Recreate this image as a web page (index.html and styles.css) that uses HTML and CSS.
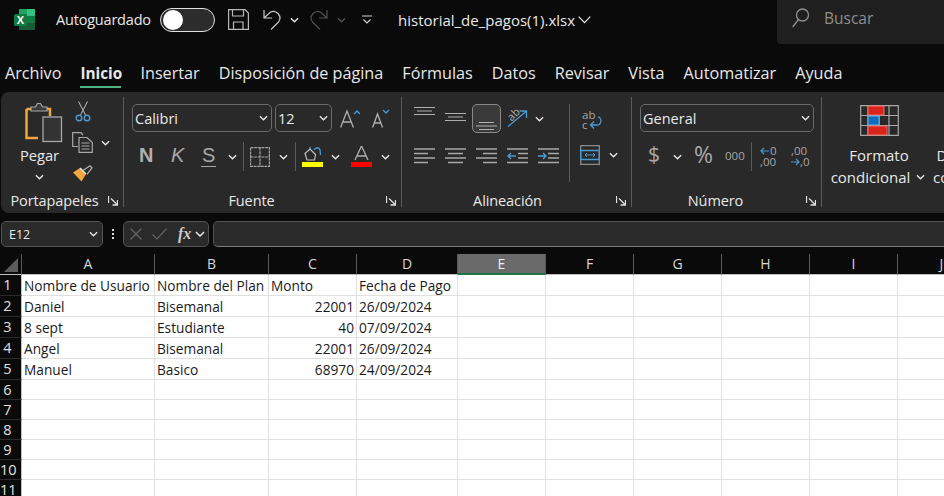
FILE: index.html
```html
<!DOCTYPE html>
<html lang="es">
<head>
    <meta charset="UTF-8">
    <meta name="viewport" content="width=device-width, initial-scale=1.0">
    <title>historial_de_pagos(1).xlsx</title>
    <link rel="stylesheet" href="styles.css">
</head>
<body>
    <svg class="defs" width="0" height="0">
        <symbol id="chev" viewBox="0 0 10 6"><path d="M1 1l4 4 4-4" fill="none" stroke="currentColor" stroke-width="1.5"/></symbol>
        <symbol id="launch" viewBox="0 0 10 10"><path d="M.5 0v7M3 2.5l6 6M4.500 9H9.500V4" fill="none" stroke="currentColor" stroke-width="1.300"/></symbol>
    </svg>

    <header class="titlebar">
        <svg class="logo" width="21" height="21" viewBox="0 0 21 21">
            <rect x="5" y="0" width="16" height="7" rx="1" fill="#21a366"/>
            <rect x="13" y="0" width="8" height="7" rx="1" fill="#33c481"/>
            <rect x="5" y="7" width="8" height="7" fill="#21a366"/>
            <rect x="13" y="7" width="8" height="7" fill="#107c41"/>
            <rect x="5" y="14" width="16" height="7" rx="1" fill="#185c37"/>
            <rect x="0" y="5" width="13" height="12" rx="1.500" fill="#107c41"/>
            <text x="6.500" y="15" text-anchor="middle" class="logo-x">X</text>
        </svg>
        <span class="autosave">Autoguardado</span>
        <span class="toggle"><span class="knob"></span></span>
        <svg class="qat-save" width="21" height="21" viewBox="0 0 21 21" fill="none" stroke="#b8b8b8" stroke-width="1.200">
            <path d="M.6.6H17L20.400 4V20.400H.6Z"/><path d="M4.500.6V7H15.500V.6M5.500 20.400V13H15V20.400"/>
        </svg>
        <svg class="qat-undo" width="20" height="21" viewBox="0 0 20 21" fill="none" stroke="#c8c8c8" stroke-width="1.200">
            <path d="M2 1v8h8M2 9l6-5.500a6.500 6.500 0 0 1 8.500 9.500L9 20.500"/>
        </svg>
        <svg class="chev chev-undo"><use href="#chev"/></svg>
        <svg class="qat-redo" width="20" height="21" viewBox="0 0 20 21" fill="none" stroke="#505050" stroke-width="1.200">
            <path d="M18 1v8h-8M18 9l-6-5.500a6.500 6.500 0 0 0-8.500 9.500l7.500 7.500"/>
        </svg>
        <svg class="chev chev-redo"><use href="#chev"/></svg>
        <svg class="qat-more" width="10" height="10" viewBox="0 0 10 10" fill="none" stroke="#d0d0d0" stroke-width="1.200"><path d="M0 1h10M1.500 4.500L5 8l3.500-3.500"/></svg>
        <span class="filename">historial_de_pagos(1).xlsx</span>
        <svg class="file-chev" width="13" height="8" viewBox="0 0 13 8"><path d="M.7.7l5.800 6 5.800-6" fill="none" stroke="#e8e8e8" stroke-width="1.200"/></svg>
        <div class="search">
            <svg width="18" height="20" viewBox="0 0 18 20" fill="none" stroke="#909090" stroke-width="1.300"><circle cx="10.500" cy="7" r="6"/><path d="M6.500 11.500L.7 19"/></svg>
            <span>Buscar</span>
        </div>
    </header>

    <nav class="tabs">
        <span class="tab">Archivo</span>
        <span class="tab tab-active">Inicio</span>
        <span class="tab">Insertar</span>
        <span class="tab">Disposición de página</span>
        <span class="tab">Fórmulas</span>
        <span class="tab">Datos</span>
        <span class="tab">Revisar</span>
        <span class="tab">Vista</span>
        <span class="tab">Automatizar</span>
        <span class="tab">Ayuda</span>
    </nav>

    <section class="ribbon">
        <div class="group group-clip">
            <div class="clip-body">
                <div class="paste">
                    <svg class="paste-icon" width="38" height="41" viewBox="0 0 38 41" fill="none">
                        <path d="M1.500 7H25V14M1.500 7V36H13" stroke="#f2a73b" stroke-width="2.500"/>
                        <path d="M6 9V5h4.500l2-3.500h3l2 3.500H22v4Z" fill="#3a3a3a" stroke="#a8a8a8" stroke-width="1.200"/>
                        <rect x="18" y="15" width="18.500" height="24.500" fill="#333" stroke="#a8a8a8" stroke-width="1.300"/>
                    </svg>
                    <span class="paste-label">Pegar</span>
                    <svg class="chev"><use href="#chev"/></svg>
                </div>
                <div class="clip-tools">
                    <svg class="tool-cut" width="16" height="21" viewBox="0 0 16 21" fill="none" stroke="#a8a8a8" stroke-width="1.100">
                        <path d="M3.500 .5L10.500 14M12.500 .5L5.500 14"/>
                        <circle cx="4" cy="17" r="2.800" stroke="#4a9ad4" stroke-width="1.400"/><circle cx="12" cy="17" r="2.800" stroke="#4a9ad4" stroke-width="1.400"/>
                    </svg>
                    <div class="tool-copy">
                        <svg width="21" height="21" viewBox="0 0 21 21" fill="none" stroke="#a8a8a8" stroke-width="1.200">
                            <path d="M6 14.500H.7V.7H9L11 3"/>
                            <path d="M7 5.500H15L20.300 10.500V20.300H7Z" fill="#292929"/>
                            <path d="M9.500 11h8M9.500 14h8M9.500 17h8"/>
                        </svg>
                        <svg class="chev"><use href="#chev"/></svg>
                    </div>
                    <svg class="tool-brush" width="20" height="18" viewBox="0 0 20 18" fill="none">
                        <path d="M0 7.500L7 3l6 6-4.500 7.500Z" fill="#f2a73b"/>
                        <path d="M7 3l6 6" stroke="#e8e8e8" stroke-width="1.400"/>
                        <path d="M10 5.500L17 .8l2 2-5 6.500" stroke="#b0b0b0" stroke-width="1.300"/>
                    </svg>
                </div>
            </div>
            <div class="group-foot">
                <span class="group-label">Portapapeles</span>
                <svg class="launcher"><use href="#launch"/></svg>
            </div>
        </div>

        <div class="group group-font">
            <div class="select-row">
                <div class="select select-font"><span>Calibri</span><svg class="chev"><use href="#chev"/></svg></div>
                <div class="select select-size"><span>12</span><svg class="chev"><use href="#chev"/></svg></div>
                <svg class="grow" width="20" height="19" viewBox="0 0 20 19" fill="none" stroke="#b0b0b0" stroke-width="1.300">
                    <path d="M.6 18.500L7 2l6.400 16.500M3 13h8"/><path d="M14 5l3-3 3 3" stroke="#4a9ad4"/>
                </svg>
                <svg class="shrink" width="20" height="19" viewBox="0 0 20 19" fill="none" stroke="#b0b0b0" stroke-width="1.300">
                    <path d="M.6 18.500L5.500 5l5 13.500M2.300 14h6.400"/><path d="M11 1l3 3 3-3" stroke="#4a9ad4"/>
                </svg>
            </div>
            <div class="font-tools">
                <span class="bold">N</span>
                <span class="italic">K</span>
                <span class="under">S</span>
                <svg class="chev"><use href="#chev"/></svg>
                <i class="vsep"></i>
                <svg width="20" height="20" viewBox="0 0 20 20" fill="none" stroke="#a0a0a0" stroke-width="1.200" stroke-dasharray="3 .6">
                    <path d="M.6.6H19.400V19.400H.6ZM10 .6V19.400M.6 10H19.400"/>
                </svg>
                <svg class="chev"><use href="#chev"/></svg>
                <i class="vsep"></i>
                <svg width="21" height="21" viewBox="0 0 21 21" fill="none">
                    <path d="M3 7.500L8 3l5.500 5.500-1 5.500H5Z" stroke="#c0c0c0" stroke-width="1.200"/>
                    <path d="M8 3V.8M12 4c2-3 5-3 6 0l.5 5" stroke="#4a9ad4" stroke-width="1.300"/>
                    <rect y="16" width="21" height="5" fill="#ffff00"/>
                </svg>
                <svg class="chev"><use href="#chev"/></svg>
                <svg width="21" height="21" viewBox="0 0 21 21" fill="none">
                    <path d="M4 14L10.500 0 17 14M6 10h9" stroke="#b0b0b0" stroke-width="1.300"/>
                    <rect y="16" width="21" height="5" fill="#ff0000"/>
                </svg>
                <svg class="chev"><use href="#chev"/></svg>
            </div>
            <div class="group-foot">
                <span class="group-label shift">Fuente</span>
                <svg class="launcher"><use href="#launch"/></svg>
            </div>
        </div>

        <div class="group group-align">
            <div class="align-body">
                <div class="align-left">
                    <div class="align-top">
                        <svg width="21" height="24" viewBox="0 0 21 24"><path d="M0 .5h21M3 4h15M0 7.500h21" stroke="#b0b0b0"/></svg>
                        <svg width="21" height="24" viewBox="0 0 21 24"><path d="M0 6.500h21M3 10h15M0 13.500h21" stroke="#b0b0b0"/></svg>
                        <span class="align-on"><svg width="21" height="24" viewBox="0 0 21 24"><path d="M3 16.500h15M0 20h21M3 23.500h15" stroke="#b0b0b0"/></svg></span>
                        <svg class="orient-icon" width="20" height="19" viewBox="0 0 20 19" fill="none">
                            <path d="M1 17.500L19 2.500M12.500 2H19.500V9" stroke="#4a9ad4" stroke-width="1.300"/>
                            <text x="1" y="10" class="orient" transform="rotate(-45 6 7)">ab</text>
                        </svg>
                        <svg class="chev"><use href="#chev"/></svg>
                    </div>
                    <div class="align-bottom">
                        <svg width="21" height="16" viewBox="0 0 21 16"><path d="M0 1h21M0 5.500h14M0 10h21M0 14.500h14" stroke="#a8a8a8" stroke-width="1.500"/></svg>
                        <svg width="21" height="16" viewBox="0 0 21 16"><path d="M0 1h21M3 5.500h15M0 10h21M3 14.500h15" stroke="#a8a8a8" stroke-width="1.500"/></svg>
                        <svg width="21" height="16" viewBox="0 0 21 16"><path d="M0 1h21M7 5.500h14M0 10h21M7 14.500h14" stroke="#a8a8a8" stroke-width="1.500"/></svg>
                        <svg width="21" height="16" viewBox="0 0 21 16" fill="none"><path d="M0 1h21M11 5.500h10M11 10h10M0 14.500h21" stroke="#a8a8a8" stroke-width="1.500"/><path d="M9 8H1M4 5L1 8l3 3" stroke="#4a9ad4" stroke-width="1.400"/></svg>
                        <svg width="21" height="16" viewBox="0 0 21 16" fill="none"><path d="M0 1h21M10 5.500h11M10 10h11M0 14.500h21" stroke="#a8a8a8" stroke-width="1.500"/><path d="M0 8h8M5 5l3 3-3 3" stroke="#4a9ad4" stroke-width="1.400"/></svg>
                    </div>
                </div>
                <i class="align-sep"></i>
                <div class="align-right">
                    <svg class="wrap" width="21" height="20" viewBox="0 0 21 20" fill="none">
                        <text x="0" y="9" class="wrap-txt">ab</text><text x="0" y="19" class="wrap-txt">c</text>
                        <path d="M16 7c4 0 4 8-1 8H9M12 11.500L8.500 15l3.500 3.500" stroke="#4a9ad4" stroke-width="1.300"/>
                    </svg>
                    <div class="merge">
                        <svg width="20" height="20" viewBox="0 0 20 20" fill="none">
                            <path d="M.7.7H19.300V19.300H.7Z" stroke="#8a8a8a" stroke-width="1.300"/>
                            <path d="M.7 5.500H19.300V14.500H.7Z" stroke="#4a9ad4" stroke-width="1.300"/>
                            <path d="M5 10H15M7 8l-2 2 2 2M13 8l2 2-2 2" stroke="#4a9ad4"/>
                        </svg>
                        <svg class="chev"><use href="#chev"/></svg>
                    </div>
                </div>
            </div>
            <div class="group-foot">
                <span class="group-label shift">Alineación</span>
                <svg class="launcher"><use href="#launch"/></svg>
            </div>
        </div>

        <div class="group group-number">
            <div class="select select-format"><span>General</span><svg class="chev"><use href="#chev"/></svg></div>
            <div class="number-tools">
                <span class="num-dollar">$</span>
                <svg class="chev"><use href="#chev"/></svg>
                <span class="num-pct">%</span>
                <span class="num-thou">000</span>
                <i class="vsep"></i>
                <svg class="dec" width="19" height="21" viewBox="0 0 19 21" fill="none">
                    <text x="10" y="9" class="dec-txt">0</text><text x="0" y="20" class="dec-txt">,00</text>
                    <path d="M9 5H1M4 2L1 5l3 3" stroke="#4a9ad4" stroke-width="1.200"/>
                </svg>
                <svg class="dec" width="19" height="21" viewBox="0 0 19 21" fill="none">
                    <text x="0" y="9" class="dec-txt">,00</text><text x="9" y="20" class="dec-txt">,0</text>
                    <path d="M0 16H8M5 13l3 3-3 3" stroke="#4a9ad4" stroke-width="1.200"/>
                </svg>
            </div>
            <div class="group-foot">
                <span class="group-label shift">Número</span>
                <svg class="launcher"><use href="#launch"/></svg>
            </div>
        </div>

        <div class="group-big">
            <div class="big-btn">
                <svg width="39" height="31" viewBox="0 0 39 31" fill="none">
                    <path d="M.7.7H38.300V30.300H.7ZM.7 10.500H38.300M.7 20.500H38.300M8 .7V30.300M19 .7V30.300M29 .7V30.300" stroke="#a8a8a8" stroke-width="1.200"/>
                    <rect x="8" y="1" width="16" height="9" fill="#d9241c" stroke="#f07070"/>
                    <rect x="8" y="11" width="11" height="9" fill="#0f6cbd" stroke="#6cb0e8"/>
                    <rect x="8" y="21" width="19" height="9" fill="#d9241c" stroke="#f07070"/>
                </svg>
                <span class="big-line">Formato</span>
                <span class="big-line big-cond">condicional <svg class="chev"><use href="#chev"/></svg></span>
            </div>
            <div class="big-btn big-next">
                <span class="big-spacer"></span>
                <span class="big-line">Dar formato</span>
                <span class="big-line">como tabla <svg class="chev"><use href="#chev"/></svg></span>
            </div>
        </div>
    </section>

    <section class="formula">
        <div class="namebox"><span>E12</span><svg class="chev"><use href="#chev"/></svg></div>
        <span class="dots"><i></i><i></i><i></i></span>
        <div class="fxbox">
            <svg width="12" height="12" viewBox="0 0 12 12"><path d="M.5.5l11 11M11.500.5l-11 11" stroke="#666" stroke-width="1.200"/></svg>
            <svg width="15" height="12" viewBox="0 0 15 12" fill="none"><path d="M.5 6.500L5 11 14.500.7" stroke="#666" stroke-width="1.200"/></svg>
            <span class="fx">fx</span>
            <svg class="chev"><use href="#chev"/></svg>
        </div>
        <div class="forminput"></div>
    </section>

    <main class="sheet">
        <div class="hd corner"><svg width="14" height="14" viewBox="0 0 14 14"><path d="M14 0V14H0Z" fill="#5c5c5c"/></svg></div>
        <div class="hd">A</div><div class="hd">B</div><div class="hd">C</div><div class="hd">D</div><div class="hd hd-on">E</div><div class="hd">F</div><div class="hd">G</div><div class="hd">H</div><div class="hd">I</div><div class="hd">J</div>

        <div class="rh">1</div><div class="c">Nombre de Usuario</div><div class="c">Nombre del Plan</div><div class="c">Monto</div><div class="c">Fecha de Pago</div><div class="c"></div><div class="c"></div><div class="c"></div><div class="c"></div><div class="c"></div><div class="c"></div>
        <div class="rh">2</div><div class="c">Daniel</div><div class="c">Bisemanal</div><div class="c num">22001</div><div class="c">26/09/2024</div><div class="c"></div><div class="c"></div><div class="c"></div><div class="c"></div><div class="c"></div><div class="c"></div>
        <div class="rh">3</div><div class="c">8 sept</div><div class="c">Estudiante</div><div class="c num">40</div><div class="c">07/09/2024</div><div class="c"></div><div class="c"></div><div class="c"></div><div class="c"></div><div class="c"></div><div class="c"></div>
        <div class="rh">4</div><div class="c">Angel</div><div class="c">Bisemanal</div><div class="c num">22001</div><div class="c">26/09/2024</div><div class="c"></div><div class="c"></div><div class="c"></div><div class="c"></div><div class="c"></div><div class="c"></div>
        <div class="rh">5</div><div class="c">Manuel</div><div class="c">Basico</div><div class="c num">68970</div><div class="c">24/09/2024</div><div class="c"></div><div class="c"></div><div class="c"></div><div class="c"></div><div class="c"></div><div class="c"></div>
        <div class="rh">6</div><div class="c"></div><div class="c"></div><div class="c"></div><div class="c"></div><div class="c"></div><div class="c"></div><div class="c"></div><div class="c"></div><div class="c"></div><div class="c"></div>
        <div class="rh">7</div><div class="c"></div><div class="c"></div><div class="c"></div><div class="c"></div><div class="c"></div><div class="c"></div><div class="c"></div><div class="c"></div><div class="c"></div><div class="c"></div>
        <div class="rh">8</div><div class="c"></div><div class="c"></div><div class="c"></div><div class="c"></div><div class="c"></div><div class="c"></div><div class="c"></div><div class="c"></div><div class="c"></div><div class="c"></div>
        <div class="rh">9</div><div class="c"></div><div class="c"></div><div class="c"></div><div class="c"></div><div class="c"></div><div class="c"></div><div class="c"></div><div class="c"></div><div class="c"></div><div class="c"></div>
        <div class="rh">10</div><div class="c"></div><div class="c"></div><div class="c"></div><div class="c"></div><div class="c"></div><div class="c"></div><div class="c"></div><div class="c"></div><div class="c"></div><div class="c"></div>
        <div class="rh">11</div><div class="c"></div><div class="c"></div><div class="c"></div><div class="c"></div><div class="c"></div><div class="c"></div><div class="c"></div><div class="c"></div><div class="c"></div><div class="c"></div>
    </main>
</body>
</html>
```

FILE: styles.css
```css
* {
    box-sizing: border-box;
}
html, body {
    margin: 0;
    height: 496px;
    overflow: hidden;
}
body {
    width: 944px;
    background: #0a0a0a;
    color: #e8e8e8;
    font-family: "Open Sans", "Noto Sans", sans-serif;
    font-size: 14px;
}
svg {
    display: block;
    flex: none;
}
.defs {
    position: absolute;
}
.chev {
    width: 9px;
    height: 6px;
    color: #e8e8e8;
}

/* title bar */
.titlebar {
    height: 46px;
    display: flex;
    align-items: center;
    padding-left: 14px;
}
.logo {
    margin-top: -7px;
}
.logo-x {
    font: bold 11px "Liberation Sans", sans-serif;
    fill: #fff;
}
.autosave {
    margin-left: 21px;
    width: 104px;
    margin-top: -8px;
    font-size: 14.500px;
    letter-spacing: -0.2px;
}
.toggle {
    width: 55px;
    height: 24px;
    margin-top: -7px;
    border: 1px solid #e0e0e0;
    border-radius: 12px;
    background: #2c2c2c;
    padding: 1px 2px;
}
.knob {
    display: block;
    width: 20px;
    height: 20px;
    border-radius: 50%;
    background: #fff;
}
.qat-save {
    margin: -7px 0 0 13px;
}
.qat-undo {
    margin: -7px 0 0 13px;
}
.chev-undo {
    margin: -7px 0 0 8px;
}
.qat-redo {
    margin: -7px 0 0 10px;
}
.chev-redo {
    margin: -7px 0 0 8px;
    color: #505050;
}
.qat-more {
    margin: -7px 0 0 16px;
}
.filename {
    margin: -6px 0 0 26px;
    width: 180px;
    font-size: 15px;
    white-space: nowrap;
}
.file-chev {
    margin-top: -6px;
}
.search {
    margin-left: auto;
    width: 167px;
    height: 44px;
    align-self: flex-start;
    background: #1f1f1f;
    border-bottom-left-radius: 4px;
    display: flex;
    align-items: center;
    padding: 0 0 8px 15px;
    gap: 14px;
    color: #8e8e8e;
    font-size: 15.500px;
}

/* tabs */
.tabs {
    height: 46px;
    display: flex;
    gap: 19px;
    padding: 16px 0 0 5px;
}
.tab {
    height: 26px;
    line-height: 22px;
    font-size: 16.200px;
    white-space: nowrap;
}
.tab-active {
    width: 41px;
    text-align: center;
    font-weight: 700;
    border-bottom: 2px solid #4fb286;
    font-size: 15.300px;
}

/* ribbon */
.ribbon {
    height: 121px;
    margin-left: 1px;
    padding: 5px 0;
    background: #292929;
    border-radius: 8px 0 0 8px;
    display: flex;
    overflow: hidden;
}
.group {
    height: 110px;
    border-right: 1px solid #5a5a5a;
    display: flex;
    flex-direction: column;
    flex: none;
}
.group-foot {
    margin-top: auto;
    height: 12px;
    line-height: 12px;
    display: flex;
    align-items: center;
}
.group-label {
    flex: 1;
    text-align: center;
    font-size: 14.500px;
    letter-spacing: -0.1px;
    white-space: nowrap;
}
.group-label.shift {
    padding-right: 15px;
}
.launcher {
    width: 10px;
    height: 10px;
    margin-right: 5px;
    color: #e0e0e0;
}
.vsep {
    display: block;
    width: 1px;
    height: 29px;
    background: #5a5a5a;
}
.select {
    height: 28px;
    border: 1px solid #6a6a6a;
    border-radius: 5px;
    display: flex;
    align-items: center;
    justify-content: space-between;
    padding: 0 3px 0 2px;
    font-size: 14.500px;
    flex: none;
}

/* portapapeles */
.group-clip {
    width: 123px;
}
.clip-body {
    display: flex;
}
.paste {
    width: 71px;
    padding: 5px 0 0 6px;
    display: flex;
    flex-direction: column;
    align-items: center;
}
.paste-icon {
    margin-left: 8px;
}
.paste-label {
    margin-top: 2px;
    line-height: 20px;
    font-size: 14.700px;
}
.paste .chev {
    margin-top: 9px;
}
.clip-tools {
    padding-top: 4px;
}
.tool-cut {
    margin-left: 3px;
}
.tool-copy {
    margin-top: 10px;
    display: flex;
    align-items: center;
    gap: 8px;
}
.tool-brush {
    margin: 12px 0 0 1px;
}

/* fuente */
.group-font {
    width: 278px;
    padding-left: 8px;
}
.select-row {
    margin-top: 7px;
    display: flex;
    align-items: center;
}
.select-font {
    width: 140px;
}
.select-size {
    width: 57px;
    margin-left: 3px;
}
.grow {
    margin-left: 8px;
}
.shrink {
    margin-left: 12px;
}
.font-tools {
    margin-top: 10px;
    height: 26px;
    padding-left: 7px;
    display: grid;
    grid-template-columns: 32px 30px 27px 15px 7px 29px 16px 7px 29px 20px 30px auto;
    align-items: center;
    justify-items: start;
    color: #a8a8a8;
}
.bold, .italic, .under {
    margin-top: -2px;
}
.bold {
    font: bold 20px "Liberation Sans", sans-serif;
    color: #b0b0b0;
}
.italic {
    font: italic 20px "Liberation Sans", sans-serif;
}
.under {
    font: 20px "Liberation Sans", sans-serif;
    border-bottom: 1px solid #a8a8a8;
    padding: 0 1px;
    line-height: 21px;
}

/* alineacion */
.group-align {
    width: 230px;
    padding-left: 12px;
}
.align-body {
    display: flex;
    padding-top: 7px;
    height: 84px;
}
.align-left {
    width: 155px;
}
.align-top {
    display: grid;
    grid-template-columns: 31px 27px 35px 28px auto;
    align-items: center;
    justify-items: start;
    height: 29px;
}
.align-on {
    width: 29px;
    height: 29px;
    border: 1px solid #8a8a8a;
    border-radius: 5px;
    background: #3a3a3a;
    padding: 1px 3px;
}
.orient-icon {
    overflow: visible;
}
.orient {
    font-size: 11px;
    fill: #b0b0b0;
}
.align-bottom {
    margin-top: 15px;
    display: grid;
    grid-template-columns: repeat(5, 31px);
}
.align-sep {
    display: block;
    width: 1px;
    height: 78px;
    background: #5a5a5a;
}
.align-right {
    padding-left: 12px;
}
.wrap {
    margin-top: 6px;
    overflow: visible;
}
.wrap-txt {
    font-size: 11.500px;
    fill: #a8a8a8;
}
.merge {
    margin: 15px 0 0 -2px;
    display: flex;
    align-items: center;
    gap: 9px;
}

/* numero */
.group-number {
    width: 190px;
    padding-left: 8px;
}
.select-format {
    width: 174px;
    margin-top: 7px;
}
.number-tools {
    margin-top: 10px;
    padding-left: 8px;
    height: 26px;
    display: grid;
    grid-template-columns: 25px 21px 31px 26px 9px 31px auto;
    align-items: center;
    justify-items: start;
    color: #a8a8a8;
}
.num-dollar, .num-pct {
    margin-top: -5px;
}
.num-dollar {
    font-size: 21px;
}
.num-pct {
    font-size: 23px;
}
.num-thou {
    margin-top: -2px;
    font-size: 11.500px;
}
.dec {
    overflow: visible;
}
.dec-txt {
    font-size: 11.500px;
    fill: #a8a8a8;
}

/* boton grande */
.group-big {
    display: flex;
    flex: none;
    padding-top: 8px;
}
.big-btn {
    width: 102px;
    padding-left: 12px;
    display: flex;
    flex-direction: column;
    align-items: center;
}
.big-line {
    display: flex;
    align-items: center;
    gap: 6px;
    line-height: 22px;
    white-space: nowrap;
    font-size: 15px;
}
.big-btn svg + .big-line {
    margin-top: 8px;
}
.big-cond {
    margin-right: 2px;
}
.big-next {
    width: auto;
    padding-left: 9px;
}
.big-spacer {
    height: 31px;
    margin-bottom: 8px;
}

/* barra de formulas */
.formula {
    height: 41px;
    padding-top: 8px;
    display: flex;
    align-items: flex-start;
}
.namebox, .fxbox, .forminput {
    height: 26px;
    background: #2a2a2a;
    border: 1px solid #525252;
    border-radius: 5px;
    flex: none;
}
.namebox {
    width: 102px;
    margin-left: 1px;
    display: flex;
    align-items: center;
    justify-content: space-between;
    padding: 0 4px 0 7px;
    font-size: 12.500px;
}
.dots {
    width: 20px;
    flex: none;
    display: flex;
    flex-direction: column;
    align-items: center;
    gap: 2px;
    padding-top: 8px;
}
.dots i {
    display: block;
    width: 2px;
    height: 2px;
    background: #ddd;
}
.fxbox {
    width: 86px;
    display: flex;
    align-items: center;
    padding-left: 6px;
}
.fxbox svg:nth-child(2) {
    margin-left: 10px;
}
.fx {
    margin-left: 11px;
    font: italic bold 16px "Liberation Serif", serif;
    color: #c8c8c8;
}
.fxbox .chev {
    margin-left: 4px;
    width: 10px;
}
.forminput {
    width: 740px;
    margin-left: 4px;
    border-bottom-color: #7a7a7a;
    border-radius: 5px 0 0 5px;
}

/* hoja */
.sheet {
    display: grid;
    grid-template-columns: 22px 133px 114px 88px 101px 88px 88px 88px 88px 88px 88px;
    grid-template-rows: repeat(6, 21px) repeat(6, 20px);
    background: #fff;
    height: 242px;
    overflow: hidden;
}
.hd {
    background: #0a0a0a;
    border-right: 1px solid #5a5a5a;
    border-bottom: 1px solid #c0c0c0;
    text-align: center;
    line-height: 20px;
    font-size: 14px;
    color: #d8d8d8;
}
.corner {
    padding: 4px 0 0 4px;
}
.hd-on {
    background: #6a6a6a;
    color: #f0f0f0;
    border-bottom: 2px solid #217346;
}
.rh {
    background: #0a0a0a;
    border-right: 1px solid #c0c0c0;
    border-bottom: 1px solid #2a2a2a;
    padding-right: 6px;
    text-align: center;
    line-height: 20px;
    font-size: 14.500px;
    color: #e0e0e0;
}
.c {
    border-right: 1px solid #e0e0e0;
    border-bottom: 1px solid #e0e0e0;
    padding: 0 2px;
    color: #1a1a1a;
    font-size: 13.700px;
    line-height: 21px;
    white-space: nowrap;
    overflow: hidden;
}
.num {
    text-align: right;
}
```
